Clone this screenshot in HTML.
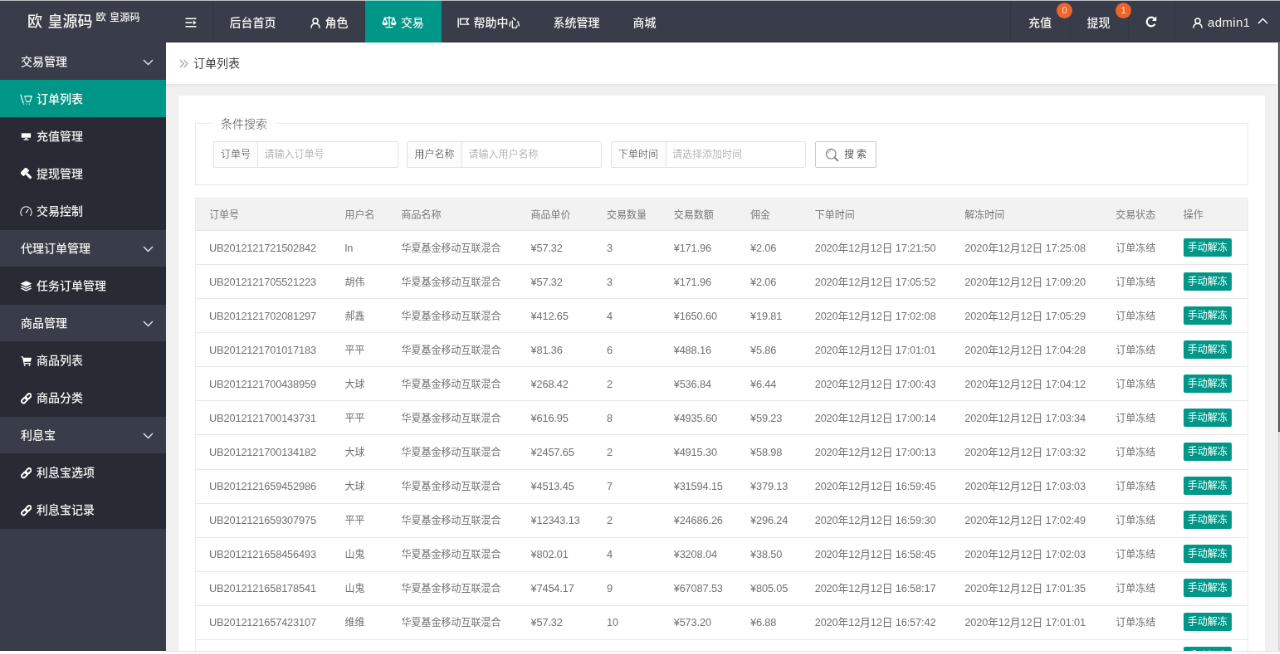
<!DOCTYPE html>
<html lang="zh-CN">
<head>
<meta charset="utf-8">
<title>订单列表</title>
<style>
*{box-sizing:border-box;margin:0;padding:0}
html,body{width:1280px;height:654px;overflow:hidden;background:#fff}
body{font-family:"Liberation Sans","Noto Sans CJK SC",sans-serif;color:#333;position:relative}
#stage{will-change:transform;position:absolute;left:0;top:1px;width:1542px;height:790px;transform:scale(0.83);transform-origin:0 0;background:#f0f0f0;overflow:hidden;font-size:14px}
/* header */
#hd{position:absolute;left:0;top:0;width:1542px;height:50px;background:#393d49;color:#fff}
#logo{position:absolute;left:0;top:0;width:200px;height:50px}
#logo .big{position:absolute;left:33px;top:11.500px;font-size:18px;line-height:26px;color:#f2f2f2;white-space:nowrap;word-spacing:1.500px;font-weight:500}
#logo .sm{position:absolute;left:115.500px;top:10.500px;font-size:12.200px;line-height:18px;color:#f2f2f2;white-space:nowrap;word-spacing:1px;font-weight:500}
.nv{position:absolute;top:0;height:50px;line-height:50px;font-size:14px;color:#f4f4f4;white-space:nowrap;font-weight:500}
.nv.on{background:#009688}
.nv svg{position:absolute}
.nv span{position:absolute;top:1px}
.vsep{position:absolute;top:0;width:1px;height:50px;background:#333743}
.badge{position:absolute;width:19px;height:19px;border-radius:9.500px;background:#ec652a;color:#ffe9d6;font-size:11px;line-height:19px;text-align:center;z-index:3}
/* sidebar */
#sd{position:absolute;left:0;top:0;width:200px;height:790px;background:#393d49}
.gi{position:absolute;left:0;width:200px;height:45px;line-height:45px;color:#f0f0f0;font-size:14px;font-weight:500}
.gi.ch{background:#282b33;height:45.600px}
.gi.on{background:#009688;color:#fff}
.gi span{position:absolute;top:.800px;white-space:nowrap}
.gi svg{position:absolute;margin-top:1px}
/* content */
#bc{position:absolute;left:200px;top:50px;width:1339px;height:50px;background:#fff;box-shadow:0 1px 3px rgba(0,0,0,.08);font-size:14px;line-height:50px;color:#444}
#card{position:absolute;left:215px;top:114px;width:1309px;height:700px;background:#fff}
#fs{position:absolute;left:235px;top:146.600px;width:1269px;height:75px;border:1px solid #e9e9e9}
#lg{position:absolute;left:255px;top:136.500px;width:78px;height:22px;background:#fff;font-size:14px;line-height:22px;color:#505050;font-weight:300;text-align:center}
.ig{position:absolute;top:168.700px;height:32px;border:1px solid #e2e2e2;background:#fff;border-radius:2px}
.ig .lb{position:absolute;left:0;top:0;height:30px;line-height:30px;background:#fcfcfc;border-right:1px solid #e2e2e2;font-size:12px;color:#3a3a3a;font-weight:300;text-align:center}
.ig .ph{position:absolute;top:0;height:30px;line-height:30px;font-size:12px;color:#b5b5b5;white-space:nowrap}
#sb{position:absolute;left:982px;top:168.700px;width:74px;height:32px;border:1px solid #c9c9c9;border-radius:2px;background:#fff;font-size:12px;line-height:30px;color:#555}
/* table */
#tb{position:absolute;left:235px;top:236.900px;width:1269px;border-collapse:collapse;table-layout:fixed;font-size:12px;color:#5e5e5e}
#thbg{position:absolute;left:235px;top:236.900px;width:1269px;height:40.300px;background:#f2f2f2}
#tb th{height:39.300px;line-height:20px;font-weight:400;text-align:left;padding:1px 0 0 16px;border-bottom:1px solid #e6e6e6;white-space:nowrap;color:#7a7a7a}
#tb td{height:41.050px;line-height:20px;padding:.600px 0 0 16px;font-weight:400;color:#727272;border-bottom:1px solid #e6e6e6;white-space:nowrap;overflow:hidden}
#tb{border:1px solid #ebebeb}
.bt{display:inline-block;width:58px;height:22px;line-height:22px;background:#009688;color:#fff;border-radius:2px;font-size:12px;font-weight:400;text-align:center;vertical-align:middle;position:relative;top:-.800px}
.n{font-size:12.8px;letter-spacing:-.15px;color:#6f6f6f}
/* overlays in final px */
#topline{position:absolute;left:0;top:0;width:1280px;height:1px;background:linear-gradient(to right,#b4b5ba 0,#b4b5ba 365.200px,#8fd6cf 365.200px,#8fd6cf 441.100px,#b4b5ba 441.100px)}
#rs1{position:absolute;left:1277.5px;top:41.5px;width:3px;height:390px;background:#666}
#rs2{position:absolute;left:1277.5px;top:431.5px;width:3px;height:223px;background:#dcdcdc}
#bot{position:absolute;left:0;top:650.5px;width:1280px;height:4px;background:#fff}
#botl{position:absolute;left:166px;top:650.5px;width:1114px;height:1px;background:#e9e9e9}
</style>
</head>
<body>
<div id="stage">
  <div id="sd">
    <div class="gi" style="top:50px"><span style="left:25px">交易管理</span><svg style="left:172px;top:19px" width="13" height="8" viewBox="0 0 13 8" fill="none" stroke="#e8e8e8" stroke-width="1.400"><path d="M1 1L6.500 6.500 12 1"/></svg></div>
    <div class="gi ch on" style="top:95px"><svg style="left:24px;top:15px" width="16" height="15" viewBox="0 0 16 15" fill="none" stroke="#fff" stroke-width="1.200"><path d="M.8 1.600l3.400 10.600"/><path d="M5.600 3.600h8.600l-2 6.600H7.400"/><path d="M5.600 3.600l1.800 6.600" stroke-width=".8"/><path d="M4.200 13.200h1M7.600 13.200h1M10.800 13.200h1" stroke-width="1.300"/></svg><span style="left:44px">订单列表</span></div>
    <div class="gi ch" style="top:140px"><svg style="left:25px;top:17px" width="13" height="11.300" viewBox="0 0 15 13" fill="#fff"><path d="M1 1.500h13v6.200H1z"/><path d="M6.300 7.500h2.400v2.300H6.300z"/><path d="M4 9.600h7v1.500H4z"/></svg><span style="left:44px">充值管理</span></div>
    <div class="gi ch" style="top:185px"><svg style="left:25px;top:15px" width="15" height="15" viewBox="0 0 15 15" fill="#fff"><g transform="rotate(-45 7.500 7.500)"><rect x="2.600" y=".6" width="9.800" height="6" rx=".8"/><rect x="5.900" y="6.400" width="3.200" height="8.200" rx="1"/></g></svg><span style="left:44px">提现管理</span></div>
    <div class="gi ch" style="top:230px"><svg style="left:24px;top:15px" width="15" height="15" viewBox="0 0 15 15" fill="none" stroke="#fff" stroke-width="1.100"><path d="M2.600 12.800A6.600 6.600 0 1 1 12.400 12.800"/><path d="M7.200 9.200L10.300 4.900"/></svg><span style="left:44px">交易控制</span></div>
    <div class="gi" style="top:275px"><span style="left:25px">代理订单管理</span><svg style="left:172px;top:19px" width="13" height="8" viewBox="0 0 13 8" fill="none" stroke="#e8e8e8" stroke-width="1.400"><path d="M1 1L6.500 6.500 12 1"/></svg></div>
    <div class="gi ch" style="top:320px"><svg style="left:24px;top:15px" width="15" height="15" viewBox="0 0 15 15" fill="#fff" stroke="none"><path d="M7.500 1.200L14.300 4.600 7.500 8 .7 4.600z"/><path d="M7.500 9.300L2.300 6.700.7 7.500l6.800 3.400 6.800-3.400-1.600-.8z"/><path d="M7.500 12.200L2.300 9.600.7 10.400l6.800 3.400 6.800-3.400-1.600-.8z"/></svg><span style="left:44px">任务订单管理</span></div>
    <div class="gi" style="top:365px"><span style="left:25px">商品管理</span><svg style="left:172px;top:19px" width="13" height="8" viewBox="0 0 13 8" fill="none" stroke="#e8e8e8" stroke-width="1.400"><path d="M1 1L6.500 6.500 12 1"/></svg></div>
    <div class="gi ch" style="top:410px"><svg style="left:24.500px;top:16px" width="13.500" height="13.500" viewBox="0 0 15 15" fill="#fff" stroke="none"><path d="M.5 1.500h2.600l.5 1.600h10.900l-1.300 5.600H4.800l.3 1.300h8.300v1.300H4L2.200 2.800H.5z"/><circle cx="5.300" cy="13" r="1.200"/><circle cx="11.700" cy="13" r="1.200"/></svg><span style="left:44px">商品列表</span></div>
    <div class="gi ch" style="top:455px"><svg style="left:24.500px;top:16px" width="13.500" height="13.500" viewBox="0 0 15 15" fill="none" stroke="#fff" stroke-width="2.100"><g transform="rotate(-45 7.500 7.500)"><rect x="-.3" y="5" width="8.600" height="5" rx="2.500"/><rect x="6.700" y="5" width="8.600" height="5" rx="2.500"/></g></svg><span style="left:44px">商品分类</span></div>
    <div class="gi" style="top:500px"><span style="left:25px">利息宝</span><svg style="left:172px;top:19px" width="13" height="8" viewBox="0 0 13 8" fill="none" stroke="#e8e8e8" stroke-width="1.400"><path d="M1 1L6.500 6.500 12 1"/></svg></div>
    <div class="gi ch" style="top:545px"><svg style="left:24.500px;top:16px" width="13.500" height="13.500" viewBox="0 0 15 15" fill="none" stroke="#fff" stroke-width="2.100"><g transform="rotate(-45 7.500 7.500)"><rect x="-.3" y="5" width="8.600" height="5" rx="2.500"/><rect x="6.700" y="5" width="8.600" height="5" rx="2.500"/></g></svg><span style="left:44px">利息宝选项</span></div>
    <div class="gi ch" style="top:590px"><svg style="left:24.500px;top:16px" width="13.500" height="13.500" viewBox="0 0 15 15" fill="none" stroke="#fff" stroke-width="2.100"><g transform="rotate(-45 7.500 7.500)"><rect x="-.3" y="5" width="8.600" height="5" rx="2.500"/><rect x="6.700" y="5" width="8.600" height="5" rx="2.500"/></g></svg><span style="left:44px">利息宝记录</span></div>
  </div>
  <div id="hd">
    <div id="logo"><span class="big">欧 皇源码</span><span class="sm">欧 皇源码</span></div>

    <div class="nv" style="left:200px;width:56px">
      <svg style="left:22.500px;top:20px" width="14" height="12" viewBox="0 0 14 12" fill="none" stroke="#fff" stroke-width="1.600"><path d="M.5 1.200h13M.5 6h8M.5 10.800h13"/><path d="M9.800 3.300L13.600 6 9.800 8.700z" fill="#fff" stroke="none"/></svg>
    </div>
    <div class="vsep" style="left:256px"></div>
    <div class="nv" style="left:256px;width:97px"><span style="left:20.5px">后台首页</span></div>
    <div class="nv" style="left:353px;width:87px">
      <svg style="left:20.500px;top:19.500px" width="12" height="13.500" viewBox="0 0 14 16" fill="none" stroke="#fff" stroke-width="1.700"><circle cx="7" cy="4.8" r="3.6"/><path d="M1 15.2c0-4 2.4-6.6 6-6.6s6 2.600 6 6.600"/></svg>
      <span style="left:38.500px">角色</span>
    </div>
    <div class="nv on" style="left:440px;width:91.500px">
      <svg style="left:20px;top:17px" width="18" height="16" viewBox="0 0 18 16" fill="none" stroke="#fff" stroke-width="1.3"><path d="M9 1.200v12.600M4.500 14.600h9M2.500 3.300h13"/><path d="M3.800 3.500L1.300 9.200M3.800 3.500L6.300 9.200M14.200 3.500l-2.500 5.700M14.200 3.500l2.500 5.700"/><path d="M.8 9.400a3 2.600 0 0 0 6 0zM11.200 9.400a3 2.600 0 0 0 6 0z" fill="#fff" stroke-width=".8"/></svg>
      <span style="left:43px">交易</span>
    </div>
    <div class="nv" style="left:531.500px;width:115px">
      <svg style="left:19.500px;top:19.500px" width="15" height="12.500" viewBox="0 0 15 12.500" fill="none" stroke="#fff" stroke-width="1.400"><path d="M1.200 .4v11.800"/><path d="M3.600 1.500h9.800l-2.400 3.300 2.400 3.300H3.600z"/></svg>
      <span style="left:39px">帮助中心</span>
    </div>
    <div class="nv" style="left:646.500px;width:96px"><span style="left:20px">系统管理</span></div>
    <div class="nv" style="left:742.500px;width:68px"><span style="left:20px">商城</span></div>

    <div class="vsep" style="left:1216.500px"></div>
    <div class="nv" style="left:1217px;width:72px"><span style="left:22px">充值</span></div>
    <div class="badge" style="left:1273px;top:1.500px">0</div>
    <div class="vsep" style="left:1289px"></div>
    <div class="nv" style="left:1289px;width:70px"><span style="left:20.500px">提现</span></div>
    <div class="badge" style="left:1344px;top:1.500px">1</div>
    <div class="vsep" style="left:1359px"></div>
    <div class="nv" style="left:1359px;width:55px">
      <svg style="left:20.500px;top:18px" width="14" height="14" viewBox="0 0 14 14" fill="none" stroke="#fff" stroke-width="2.200"><path d="M11.600 9.700A5.300 5.300 0 1 1 11 3.500"/><path d="M13.300 .6v5.400H7.900z" fill="#fff" stroke="none"/></svg>
    </div>
    <div class="vsep" style="left:1414.500px"></div>
    <div class="nv" style="left:1415px;width:127px">
      <svg style="left:21.500px;top:19.500px" width="12" height="13.500" viewBox="0 0 14 16" fill="none" stroke="#fff" stroke-width="1.700"><circle cx="7" cy="4.800" r="3.600"/><path d="M1 15.200c0-4 2.400-6.600 6-6.600s6 2.600 6 6.600"/></svg>
      <span style="left:40px;font-size:15px;letter-spacing:.35px">admin1</span>
      <svg style="left:99.500px;top:20px" width="13" height="8" viewBox="0 0 13 8" fill="none" stroke="#fff" stroke-width="1.500"><path d="M1 7L6.500 1.500 12 7"/></svg>
    </div>
  </div>
  <div id="bc"><svg style="position:absolute;left:16px;top:20px" width="11" height="11" viewBox="0 0 11 11" fill="none" stroke="#b0b0b0" stroke-width="1.500"><path d="M1 1l4.200 4.500L1 10M5.600 1l4.200 4.500L5.600 10"/></svg><span style="position:absolute;left:33px;top:0">订单列表</span></div>
  <div id="card"></div>
  <div id="fs"></div>
  <div id="lg">条件搜索</div>
  <div class="ig" style="left:257px;width:223px"><div class="lb" style="width:53px">订单号</div><div class="ph" style="left:60.500px">请输入订单号</div></div>
  <div class="ig" style="left:490px;width:235px"><div class="lb" style="width:66px">用户名称</div><div class="ph" style="left:73.500px">请输入用户名称</div></div>
  <div class="ig" style="left:735.500px;width:235.500px"><div class="lb" style="width:66px">下单时间</div><div class="ph" style="left:73.500px">请选择添加时间</div></div>
  <div id="sb"><svg style="position:absolute;left:11px;top:7px" width="17" height="17" viewBox="0 0 17 17" fill="none" stroke="#777" stroke-width="1.100"><circle cx="7.200" cy="7.200" r="5.800"/><path d="M11.400 11.400l4.400 4.400" stroke-width="1.800"/><path d="M3.600 7a3.600 3.600 0 0 1 3-3.300" stroke-width=".8"/></svg><span style="position:absolute;left:34px;top:0;letter-spacing:3px">搜索</span></div>
  <div id="thbg"></div>
  <table id="tb"><colgroup><col style="width:164px"><col style="width:68px"><col style="width:156px"><col style="width:91.5px"><col style="width:80.7px"><col style="width:92.3px"><col style="width:77.7px"><col style="width:180.7px"><col style="width:181.9px"><col style="width:81.5px"><col style="width:93.7px"></colgroup>
    <thead><tr><th>订单号</th><th>用户名</th><th>商品名称</th><th>商品单价</th><th>交易数量</th><th>交易数额</th><th>佣金</th><th>下单时间</th><th>解冻时间</th><th>交易状态</th><th>操作</th></tr></thead><tbody>
    <tr><td class="n">UB2012121721502842</td><td class="n">ln</td><td>华夏基金移动互联混合</td><td class="n">¥57.32</td><td class="n">3</td><td class="n">¥171.96</td><td class="n">¥2.06</td><td class="n">2020年12月12日 17:21:50</td><td class="n">2020年12月12日 17:25:08</td><td>订单冻结</td><td><span class="bt">手动解冻</span></td></tr>
    <tr><td class="n">UB2012121705521223</td><td>胡伟</td><td>华夏基金移动互联混合</td><td class="n">¥57.32</td><td class="n">3</td><td class="n">¥171.96</td><td class="n">¥2.06</td><td class="n">2020年12月12日 17:05:52</td><td class="n">2020年12月12日 17:09:20</td><td>订单冻结</td><td><span class="bt">手动解冻</span></td></tr>
    <tr><td class="n">UB2012121702081297</td><td>郝鑫</td><td>华夏基金移动互联混合</td><td class="n">¥412.65</td><td class="n">4</td><td class="n">¥1650.60</td><td class="n">¥19.81</td><td class="n">2020年12月12日 17:02:08</td><td class="n">2020年12月12日 17:05:29</td><td>订单冻结</td><td><span class="bt">手动解冻</span></td></tr>
    <tr><td class="n">UB2012121701017183</td><td>平平</td><td>华夏基金移动互联混合</td><td class="n">¥81.36</td><td class="n">6</td><td class="n">¥488.16</td><td class="n">¥5.86</td><td class="n">2020年12月12日 17:01:01</td><td class="n">2020年12月12日 17:04:28</td><td>订单冻结</td><td><span class="bt">手动解冻</span></td></tr>
    <tr><td class="n">UB2012121700438959</td><td>大球</td><td>华夏基金移动互联混合</td><td class="n">¥268.42</td><td class="n">2</td><td class="n">¥536.84</td><td class="n">¥6.44</td><td class="n">2020年12月12日 17:00:43</td><td class="n">2020年12月12日 17:04:12</td><td>订单冻结</td><td><span class="bt">手动解冻</span></td></tr>
    <tr><td class="n">UB2012121700143731</td><td>平平</td><td>华夏基金移动互联混合</td><td class="n">¥616.95</td><td class="n">8</td><td class="n">¥4935.60</td><td class="n">¥59.23</td><td class="n">2020年12月12日 17:00:14</td><td class="n">2020年12月12日 17:03:34</td><td>订单冻结</td><td><span class="bt">手动解冻</span></td></tr>
    <tr><td class="n">UB2012121700134182</td><td>大球</td><td>华夏基金移动互联混合</td><td class="n">¥2457.65</td><td class="n">2</td><td class="n">¥4915.30</td><td class="n">¥58.98</td><td class="n">2020年12月12日 17:00:13</td><td class="n">2020年12月12日 17:03:32</td><td>订单冻结</td><td><span class="bt">手动解冻</span></td></tr>
    <tr><td class="n">UB2012121659452986</td><td>大球</td><td>华夏基金移动互联混合</td><td class="n">¥4513.45</td><td class="n">7</td><td class="n">¥31594.15</td><td class="n">¥379.13</td><td class="n">2020年12月12日 16:59:45</td><td class="n">2020年12月12日 17:03:03</td><td>订单冻结</td><td><span class="bt">手动解冻</span></td></tr>
    <tr><td class="n">UB2012121659307975</td><td>平平</td><td>华夏基金移动互联混合</td><td class="n">¥12343.13</td><td class="n">2</td><td class="n">¥24686.26</td><td class="n">¥296.24</td><td class="n">2020年12月12日 16:59:30</td><td class="n">2020年12月12日 17:02:49</td><td>订单冻结</td><td><span class="bt">手动解冻</span></td></tr>
    <tr><td class="n">UB2012121658456493</td><td>山鬼</td><td>华夏基金移动互联混合</td><td class="n">¥802.01</td><td class="n">4</td><td class="n">¥3208.04</td><td class="n">¥38.50</td><td class="n">2020年12月12日 16:58:45</td><td class="n">2020年12月12日 17:02:03</td><td>订单冻结</td><td><span class="bt">手动解冻</span></td></tr>
    <tr><td class="n">UB2012121658178541</td><td>山鬼</td><td>华夏基金移动互联混合</td><td class="n">¥7454.17</td><td class="n">9</td><td class="n">¥67087.53</td><td class="n">¥805.05</td><td class="n">2020年12月12日 16:58:17</td><td class="n">2020年12月12日 17:01:35</td><td>订单冻结</td><td><span class="bt">手动解冻</span></td></tr>
    <tr><td class="n">UB2012121657423107</td><td>维维</td><td>华夏基金移动互联混合</td><td class="n">¥57.32</td><td class="n">10</td><td class="n">¥573.20</td><td class="n">¥6.88</td><td class="n">2020年12月12日 16:57:42</td><td class="n">2020年12月12日 17:01:01</td><td>订单冻结</td><td><span class="bt">手动解冻</span></td></tr>
    <tr><td></td><td></td><td></td><td></td><td></td><td></td><td></td><td></td><td></td><td></td><td><span class="bt">手动解冻</span></td></tr>
  </tbody></table>
</div>
<div id="topline"></div><div id="rs1"></div><div id="rs2"></div><div id="bot"></div><div id="botl"></div>
</body>
</html>
